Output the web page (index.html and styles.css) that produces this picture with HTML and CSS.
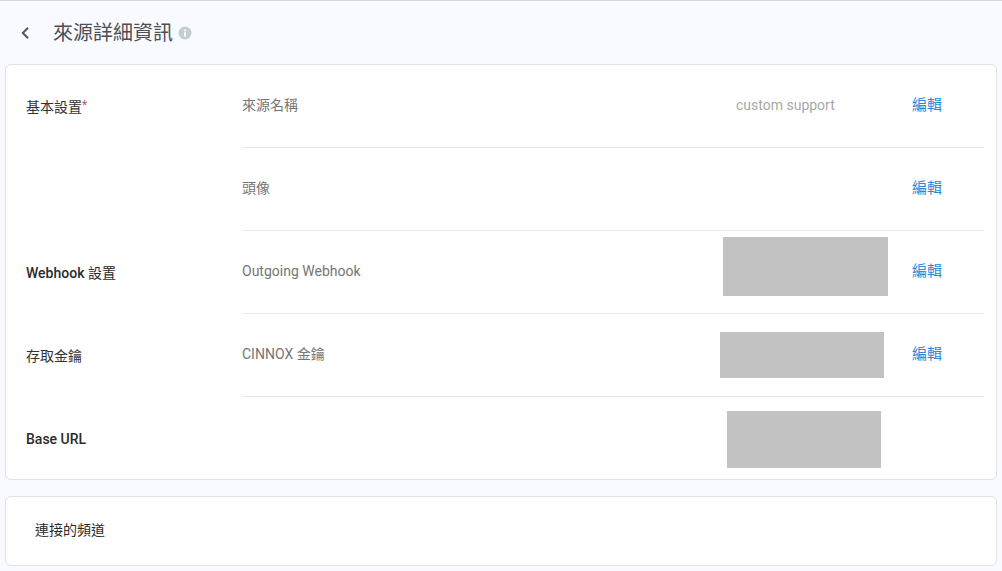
FILE: index.html
```html
<!DOCTYPE html>
<html lang="zh-Hant">
<head>
<meta charset="utf-8">
<title>來源詳細資訊</title>
<link rel="stylesheet" href="styles.css">
</head>
<body>
<header class="page-header">
  <svg class="back" width="10" height="14" viewBox="0 0 10 14"><path d="M8 1.8 2.8 7 8 12.2" fill="none" stroke="#4a5a68" stroke-width="2"/></svg>
  <h1 class="title">來源詳細資訊</h1>
  <svg class="info" width="14" height="14" viewBox="0 0 14 14"><circle cx="7" cy="7" r="6.5" fill="#c3ced3"/><rect x="6.1" y="6.2" width="1.8" height="4.3" fill="#fff"/><rect x="6.1" y="3.6" width="1.8" height="1.7" fill="#fff"/></svg>
</header>
<main class="content">
  <section class="card settings">
    <div class="row">
      <div class="group">基本設置<span class="req">*</span></div>
      <div class="line">
        <span class="label">來源名稱</span>
        <span class="value">custom support</span>
        <a class="edit">編輯</a>
      </div>
    </div>
    <div class="row">
      <div class="group"></div>
      <div class="line">
        <span class="label">頭像</span>
        <span class="value"></span>
        <a class="edit">編輯</a>
      </div>
    </div>
    <div class="row">
      <div class="group strong">Webhook <span class="cjk">設置</span></div>
      <div class="line">
        <span class="label">Outgoing Webhook</span>
        <span class="value"></span>
        <a class="edit">編輯</a>
        <div class="mask mask-webhook"></div>
      </div>
    </div>
    <div class="row">
      <div class="group">存取金鑰</div>
      <div class="line">
        <span class="label">CINNOX 金鑰</span>
        <span class="value"></span>
        <a class="edit">編輯</a>
        <div class="mask mask-key"></div>
      </div>
    </div>
    <div class="row">
      <div class="group strong">Base URL</div>
      <div class="line">
        <span class="label"></span>
        <span class="value"></span>
        <div class="mask mask-url"></div>
      </div>
    </div>
  </section>
  <section class="card channels">連接的頻道</section>
</main>
</body>
</html>
```
FILE: styles.css
```css
* { box-sizing: border-box; }
html, body { height: 100%; }
body {
  margin: 0;
  background: #f9faff;
  border-top: 1px solid #d5d8dc;
  font-family: Roboto, "Noto Sans CJK TC", sans-serif;
  font-size: 14px;
  line-height: 20px;
  color: #2b2b2b;
  overflow: hidden;
}
.page-header {
  height: 63px;
  display: flex;
  align-items: center;
  padding-left: 20px;
}
.back { display: block; margin-right: 23px; }
.title {
  margin: 0 5px 0 0;
  font-size: 20px;
  line-height: 28px;
  font-weight: 400;
  color: #4b4f52;
}
.info { display: block; }
.content {
  display: flex;
  flex-direction: column;
  gap: 16px;
  padding: 0 5px 0 5px;
}
.card {
  background: #fff;
  border: 1px solid #e0e2e6;
  border-radius: 6px;
}
.settings { height: 416px; }
.row {
  display: flex;
  height: 83px;
  padding-left: 20px;
}
.group {
  width: 216px;
  flex: none;
  padding-top: 32px;
  color: #333;
}
.group.strong { font-weight: 500; color: #2b2b2b; }
.cjk { font-weight: 400; }
.req { color: #d9475c; position: relative; top: -3px; font-size: 12px; line-height: 12px; }
.line {
  position: relative;
  flex: 1;
  display: flex;
  margin-right: 12px;
  padding-top: 30px;
  border-bottom: 1px solid #e8e9ec;
  color: #757575;
}
.row:last-child .line { border-bottom: 0; }
.label { width: 494px; flex: none; }
.value { width: 176px; flex: none; color: #a8a8a8; }
.edit { color: #2b87da; font-size: 15px; }
.mask { position: absolute; background: #c2c2c2; }
.mask-webhook { left: 481px; top: 6px; width: 165px; height: 59px; }
.mask-key { left: 478px; top: 18px; width: 164px; height: 46px; }
.mask-url { left: 485px; top: 14px; width: 154px; height: 57px; }
.channels {
  height: 70px;
  display: flex;
  align-items: center;
  padding: 0 0 2px 29px;
  color: #2b2b2b;
}
```
